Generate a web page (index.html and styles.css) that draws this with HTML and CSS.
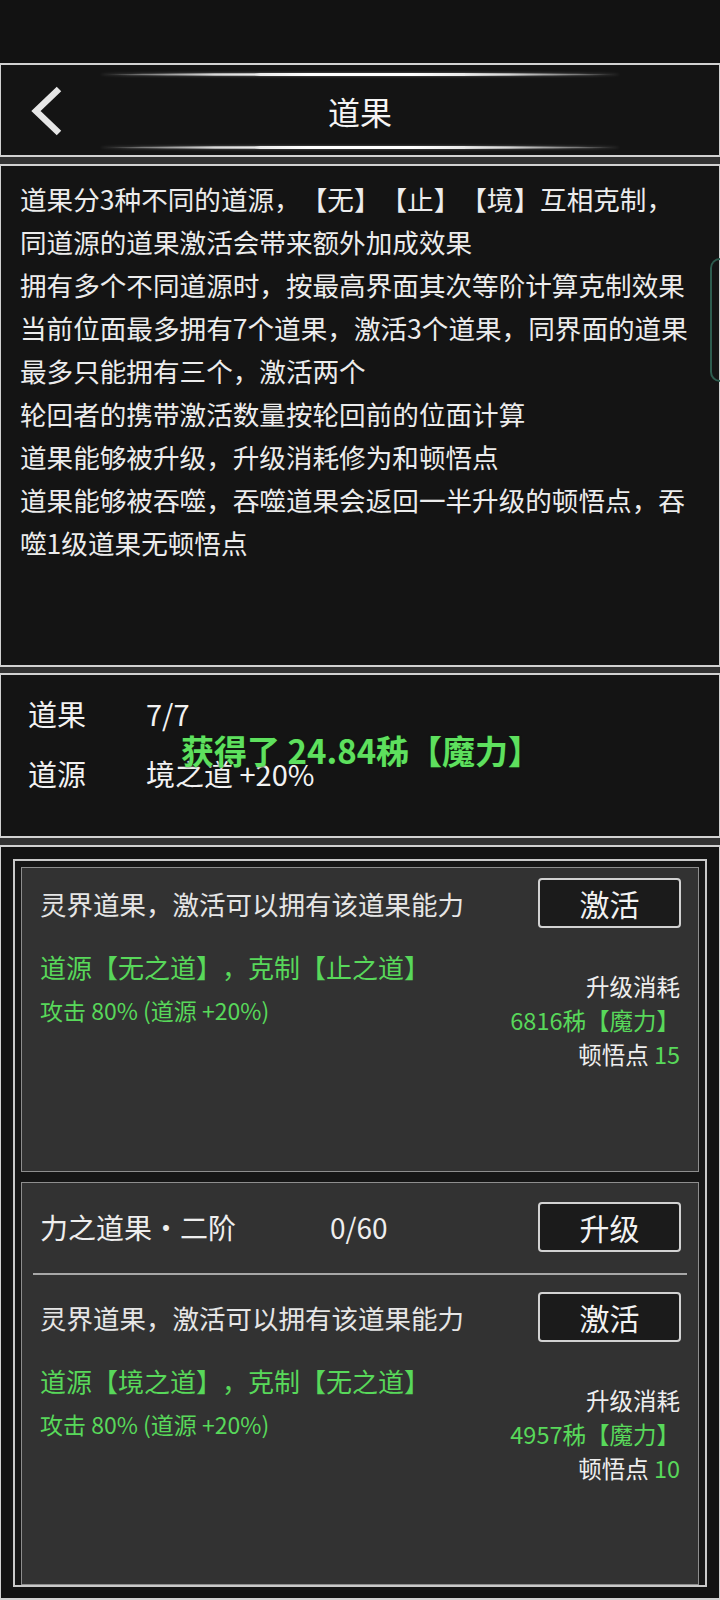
FILE: index.html
```html
<!DOCTYPE html>
<html lang="zh-CN">
<head>
<meta charset="utf-8">
<title>道果</title>
<link rel="stylesheet" href="styles.css">
</head>
<body>
<div class="status"></div>
<header class="panel header">
  <div class="glow"></div>
  <div class="title-row">
    <svg class="back" viewBox="0 0 36 52" width="36" height="52"><polyline points="30,4 7,26 30,48" fill="none" stroke="#e6e6e6" stroke-width="6.5" stroke-linejoin="miter" stroke-miterlimit="10"/></svg>
    <h1 class="title">道果</h1>
    <span></span>
  </div>
  <div class="glow"></div>
</header>
<section class="panel info">
  <p>道果分3种不同的道源，【无】【止】【境】互相克制，</p>
  <p>同道源的道果激活会带来额外加成效果</p>
  <p>拥有多个不同道源时，按最高界面其次等阶计算克制效果</p>
  <p>当前位面最多拥有7个道果，激活3个道果，同界面的道果最多只能拥有三个，激活两个</p>
  <p>轮回者的携带激活数量按轮回前的位面计算</p>
  <p>道果能够被升级，升级消耗修为和顿悟点</p>
  <p>道果能够被吞噬，吞噬道果会返回一半升级的顿悟点，吞噬1级道果无顿悟点</p>
</section>
<section class="panel stats">
  <div class="stat"><span class="label">道果</span><span class="value">7/7</span></div>
  <div class="stat"><span class="label">道源</span><span class="value">境之道 +20%</span></div>
  <div class="toast">获得了 24.84秭【魔力】</div>
</section>
<section class="panel list">
  <div class="frame">
    <article class="card card-a">
      <div class="row">
        <span class="desc">灵界道果，激活可以拥有该道果能力</span>
        <button class="btn">激活</button>
      </div>
      <div class="body">
        <div class="left">
          <div class="src">道源【无之道】，克制【止之道】</div>
          <div class="atk">攻击 80% (道源 +20%)</div>
        </div>
        <div class="right">
          <div>升级消耗</div>
          <div class="green">6816秭【魔力】</div>
          <div>顿悟点 <span class="green">15</span></div>
        </div>
      </div>
    </article>
    <article class="card card-b">
      <div class="row head">
        <span class="name">力之道果·二阶</span>
        <span class="count">0/60</span>
        <button class="btn">升级</button>
      </div>
      <div class="divider"></div>
      <div class="row row-b">
        <span class="desc">灵界道果，激活可以拥有该道果能力</span>
        <button class="btn">激活</button>
      </div>
      <div class="body">
        <div class="left">
          <div class="src">道源【境之道】，克制【无之道】</div>
          <div class="atk">攻击 80% (道源 +20%)</div>
        </div>
        <div class="right">
          <div>升级消耗</div>
          <div class="green">4957秭【魔力】</div>
          <div>顿悟点 <span class="green">10</span></div>
        </div>
      </div>
    </article>
  </div>
</section>
<div class="scroll-tab"></div>
</body>
</html>
```

FILE: styles.css
```css
* {
  box-sizing: border-box;
}

html, body {
  margin: 0;
  padding: 0;
}

body {
  width: 720px;
  height: 1600px;
  overflow: hidden;
  background: #333333;
  font-family: "Noto Sans CJK SC", "Noto Sans", sans-serif;
  color: #eeeeee;
  position: relative;
  text-spacing-trim: space-all;
}

.status {
  height: 63px;
  background: #121212;
}

.panel {
  background: #141414;
  border-style: solid;
  border-color: #d2d2d2;
  border-width: 2px 1px;
}

/* header */
.header {
  height: 94px;
  display: flex;
  flex-direction: column;
  align-items: center;
}

.glow {
  width: 520px;
  height: 3px;
  border-radius: 50%;
  background: linear-gradient(to right, rgba(120,120,120,0) 0%, #777 8%, #d8d8d8 22%, #ffffff 40%, #ffffff 60%, #d8d8d8 78%, #777 92%, rgba(120,120,120,0) 100%);
  box-shadow: 0 0 3px rgba(255,255,255,0.35);
}

.header .glow:first-child {
  margin-top: 8px;
}

.header .glow:last-child {
  margin-bottom: 6px;
}

.title-row {
  flex: 1;
  width: 100%;
  display: grid;
  grid-template-columns: 1fr auto 1fr;
  align-items: center;
}

.back {
  margin-left: 28px;
  display: block;
}

.title {
  margin: 0;
  font-size: 32px;
  font-weight: 400;
  line-height: 1;
  color: #f4f4f4;
}

/* info */
.info {
  margin-top: 7px;
  height: 503px;
  padding: 11px 26px 0 19px;
}

.info p {
  margin: 0;
  font-size: 26.6px;
  line-height: 43px;
  color: #ececec;
}

/* stats */
.stats {
  margin-top: 6px;
  height: 165px;
  padding: 8px 0 0 27px;
  position: relative;
}

.stat {
  display: flex;
  font-size: 29px;
  line-height: 60px;
  color: #f2f2f2;
}

.stat .label {
  width: 118px;
}

.toast {
  position: absolute;
  left: 180px;
  top: 55px;
  font-size: 33px;
  line-height: 40px;
  font-weight: 700;
  color: #5ee05e;
  text-shadow: 0 0 2px #0b2a0b;
  white-space: nowrap;
}

/* list */
.list {
  margin-top: 7px;
  height: 755px;
  padding: 12px 12px 0 12px;
  background: #131313;
}

.frame {
  height: 728px;
  border: 2px solid #c9c9c9;
  padding: 6px 6px 0 6px;
  overflow: hidden;
  display: flex;
  flex-direction: column;
  gap: 10px;
  background: #161616;
}

.card {
  background: #323232;
  border: 1px solid #8e8e8e;
  flex-shrink: 0;
}

.card-a {
  height: 305px;
}

.card-b {
  height: 403px;
}

.row {
  display: flex;
  align-items: center;
  justify-content: space-between;
  height: 50px;
  padding: 0 17px 0 18px;
}

.card-a .row {
  margin-top: 10px;
}

.head {
  margin-top: 19px;
  justify-content: flex-start;
}

.row-b {
  margin-top: 17px;
}

.desc {
  font-size: 26.5px;
  color: #e6e6e6;
}

.name {
  width: 290px;
  font-size: 28px;
  color: #eeeeee;
}

.count {
  flex: 1;
  font-size: 28px;
  color: #eeeeee;
}

.divider {
  margin: 21px 11px 0 11px;
  height: 2px;
  background: #a8a8a8;
}

.btn {
  width: 143px;
  height: 50px;
  background: #1b1b1b;
  border: 2px solid #d2d2d2;
  border-radius: 4px;
  color: #f2f2f2;
  font-family: inherit;
  font-size: 30px;
  line-height: 1;
  padding: 0;
}

.body {
  display: flex;
  justify-content: space-between;
  padding: 0 18px 0 18px;
}

.left .src {
  margin-top: 21px;
  font-size: 26px;
  line-height: 36px;
  color: #58d85a;
}

.left .atk {
  margin-top: 7px;
  font-size: 23px;
  line-height: 36px;
  color: #58d85a;
}

.right {
  margin-top: 41px;
  text-align: right;
  font-size: 23.5px;
  line-height: 34px;
  color: #eeeeee;
}

.green {
  color: #58d85a;
}

.scroll-tab {
  position: absolute;
  left: 710px;
  top: 258px;
  width: 10px;
  height: 124px;
  border: 2px solid #2d5c4e;
  border-right: none;
  border-radius: 12px 0 0 12px;
}
```
